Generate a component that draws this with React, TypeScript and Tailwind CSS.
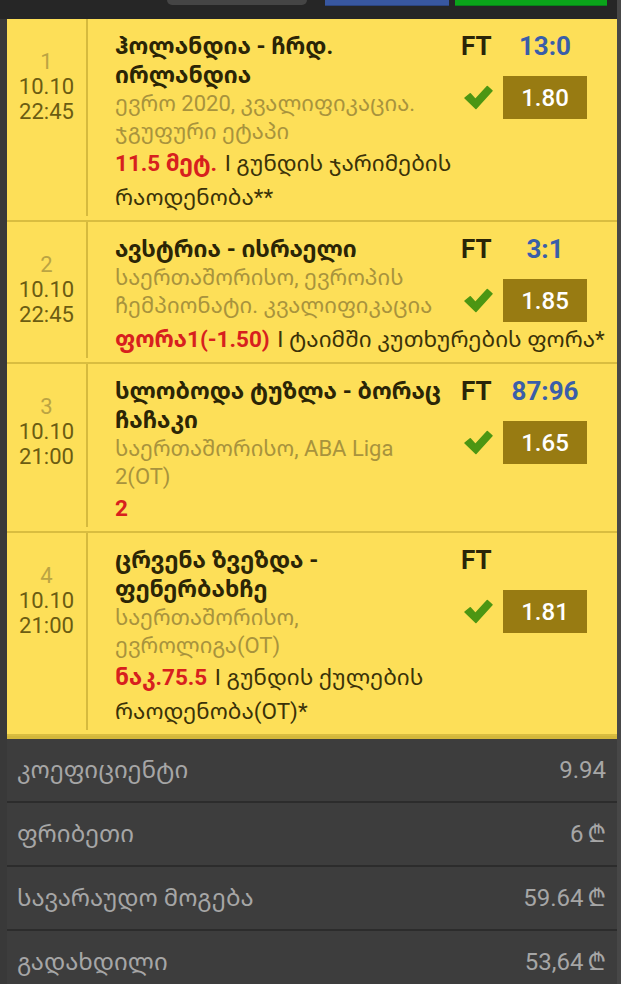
type Bet = {
  num: number
  date: string
  time: string
  title: string
  league: string
  pick: string
  market: string
  score: string
  odds: string
}

const bets: Bet[] = [
  {
    num: 1,
    date: '10.10',
    time: '22:45',
    title: 'ჰოლანდია - ჩრდ. ირლანდია',
    league: 'ევრო 2020, კვალიფიკაცია. ჯგუფური ეტაპი',
    pick: '11.5 მეტ.',
    market: 'I გუნდის ჯარიმების რაოდენობა**',
    score: '13:0',
    odds: '1.80',
  },
  {
    num: 2,
    date: '10.10',
    time: '22:45',
    title: 'ავსტრია - ისრაელი',
    league: 'საერთაშორისო, ევროპის ჩემპიონატი. კვალიფიკაცია',
    pick: 'ფორა1(-1.50)',
    market: 'I ტაიმში კუთხურების ფორა*',
    score: '3:1',
    odds: '1.85',
  },
  {
    num: 3,
    date: '10.10',
    time: '21:00',
    title: 'სლობოდა ტუზლა - ბორაც ჩაჩაკი',
    league: 'საერთაშორისო, ABA Liga 2(OT)',
    pick: '2',
    market: '',
    score: '87:96',
    odds: '1.65',
  },
  {
    num: 4,
    date: '10.10',
    time: '21:00',
    title: 'ცრვენა ზვეზდა - ფენერბახჩე',
    league: 'საერთაშორისო, ევროლიგა(OT)',
    pick: 'ნაკ.75.5',
    market: 'I გუნდის ქულების რაოდენობა(OT)*',
    score: '',
    odds: '1.81',
  },
]

const summary = [
  { label: 'კოეფიციენტი', value: '9.94', lari: false },
  { label: 'ფრიბეთი', value: '6', lari: true },
  { label: 'სავარაუდო მოგება', value: '59.64', lari: true },
  { label: 'გადახდილი', value: '53,64', lari: true },
]

function Check() {
  return (
    <svg width="29" height="25" viewBox="0 0 28 24" className="shrink-0">
      <path d="M1 12.5 L6 8.5 L11 14 L22.5 1.5 L27 5.5 L11.5 22.5 Z" fill="#4c9613" stroke="#4c9613" strokeWidth="1.5" strokeLinejoin="round" />
    </svg>
  )
}

function BetRow({ bet }: { bet: Bet }) {
  return (
    <div className="flex items-stretch border-b-2 border-[#d9bd40]">
      <div className="w-[81px] shrink-0 mb-[4px] border-r-2 border-[#d6ba3e] pt-[30px] flex flex-col items-center text-[22px] leading-[25px]">
        <span className="text-[#bba443]">{bet.num}</span>
        <span className="text-[#6b5c12]">{bet.date}</span>
        <span className="text-[#6b5c12]">{bet.time}</span>
      </div>
      <div className="flex-1 pl-[27px] pr-[8px] pt-[13px] pb-[6px]">
        <div className="flex gap-[8px]">
          <div className="flex-1 min-w-0">
            <div className="text-[23px] leading-[29px] font-bold text-[#2b2506]">{bet.title}</div>
            <div className="text-[22px] leading-[28px] text-[#a8933d]">{bet.league}</div>
          </div>
          <div className="w-[126px] mr-[22px] shrink-0">
            <div className="flex items-center h-[29px] text-[26px] font-bold">
              <span className="w-[42px] text-[#2a2508]">FT</span>
              <span className="w-[84px] text-center text-[#3a5ea9]">{bet.score}</span>
            </div>
            <div className="flex items-center mt-[15px]">
              <div className="w-[42px] pl-[3px]">
                <Check />
              </div>
              <div className="w-[84px] h-[43px] bg-[#987b12] flex items-center justify-center text-white text-[24px] font-medium">
                {bet.odds}
              </div>
            </div>
          </div>
        </div>
        <div className="text-[22.5px] leading-[34px] text-[#3a3208]">
          <span className="font-bold text-[#d7201e] pr-[2px]">{bet.pick}</span>
          {bet.market ? ' ' + bet.market : null}
        </div>
      </div>
    </div>
  )
}

export default function App() {
  return (
    <div className="w-[621px] h-[984px] overflow-hidden flex bg-[#3d3d3d] font-['Roboto','Noto_Sans_Georgian','Noto_Sans','DejaVu_Sans',sans-serif]">
      <div className="w-[617px] flex flex-col">
        <div className="h-[19px] shrink-0 bg-[#262626] flex items-start">
          <div className="ml-[167px] w-[140px] h-[5px] bg-[#454545] rounded-b-md" />
          <div className="ml-[18px] w-[124px] h-[6px] bg-[#3857a0] border-b border-[#2b4480]" />
          <div className="ml-[6px] w-[152px] h-[6px] bg-[#0aa41a] border-b border-[#08801a]" />
        </div>
        <div className="flex-1 pl-[7px] bg-[#393939] flex flex-col">
          <div className="bg-[#fddf58] border-b-[3px] border-[#d3b73a]">
            {bets.map((bet) => (
              <BetRow key={bet.num} bet={bet} />
            ))}
          </div>
          <div className="flex-1 bg-[#3d3d3d]">
            {summary.map((row) => (
              <div
                key={row.label}
                className="h-[64px] flex items-center justify-between pl-[10px] pr-[11px] border-b-2 border-[#2c2c2c] text-[24px] text-[#a6a6a6]"
              >
                <span>{row.label}</span>
                <span>
                  {row.value}
                  {row.lari && <span className="ml-[4px]">₾</span>}
                </span>
              </div>
            ))}
          </div>
        </div>
      </div>
      <div className="w-[4px] bg-[#474747]" />
    </div>
  )
}
